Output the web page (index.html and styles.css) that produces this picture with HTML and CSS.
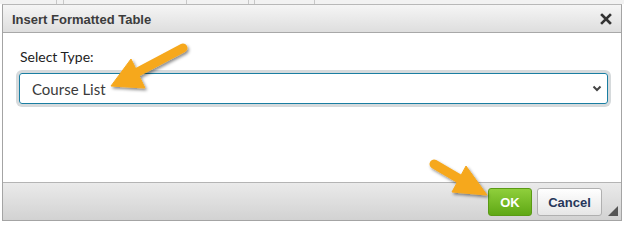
FILE: index.html
```html
<!DOCTYPE html>
<html lang="en">
<head>
  <meta charset="UTF-8">
  <title>Insert Formatted Table</title>
  <link rel="stylesheet" href="styles.css">
</head>
<body>

  <!-- Editor toolbar peeking out above the dialog -->
  <div class="toolbar-strip">
    <span class="tb-sep" style="left: 56px"></span>
    <span class="tb-sep" style="left: 63px"></span>
    <span class="tb-sep" style="left: 186px"></span>
    <span class="tb-sep" style="left: 248px"></span>
    <span class="tb-sep" style="left: 254px"></span>
    <span class="tb-sep" style="left: 314px"></span>
  </div>

  <div class="dialog">
    <div class="dialog-title">
      <span class="title-text">Insert Formatted Table</span>
      <svg class="close-icon" width="12" height="12" viewBox="0 0 12 12">
        <path d="M2 2 L10 10 M10 2 L2 10" stroke="#333" stroke-width="2.6" stroke-linecap="square"/>
      </svg>
    </div>

    <div class="dialog-body">
      <label class="field-label">Select Type:</label>
      <div class="select-box">
        <span class="select-value">Course List</span>
        <svg class="chevron" width="10" height="7" viewBox="0 0 10 7">
          <path d="M1.5 1.5 L5 5 L8.5 1.5" fill="none" stroke="#444" stroke-width="2"/>
        </svg>
      </div>
    </div>

    <div class="dialog-footer">
      <button class="btn btn-ok">OK</button>
      <button class="btn btn-cancel">Cancel</button>
      <span class="resize-grip"></span>
    </div>
  </div>

  <!-- Callout arrows drawn over the screenshot -->
  <svg class="callouts" width="624" height="225" viewBox="0 0 624 225">
    <defs>
      <filter id="shadow" x="-30%" y="-30%" width="160%" height="160%">
        <feDropShadow dx="1.5" dy="2" stdDeviation="1.6" flood-color="#000" flood-opacity="0.45"/>
      </filter>
    </defs>
    <g fill="#f6a81e" stroke="#f6a81e" filter="url(#shadow)">
      <line x1="183" y1="48" x2="134" y2="74" stroke-width="9" stroke-linecap="round"/>
      <polygon points="111,86 131,59 145,88" stroke-width="1" stroke-linejoin="round"/>
      <line x1="434" y1="164" x2="463" y2="181" stroke-width="9" stroke-linecap="round"/>
      <polygon points="487,195 466,166 452,192" stroke-width="1" stroke-linejoin="round"/>
    </g>
  </svg>

</body>
</html>
```

FILE: styles.css
```css
body {
  margin: 0;
  padding: 0;
  background-color: #fff;
  position: relative;
  width: 624px;
  height: 225px;
  overflow: hidden;
  font-family: "Liberation Sans", Arial, sans-serif;
}

.toolbar-strip {
  position: relative;
  height: 4px;
  background: #f2f2f2;
}

.tb-sep {
  position: absolute;
  top: 0;
  width: 1px;
  height: 4px;
  background: #c8c8c8;
}

/* Dialog */
.dialog {
  margin-left: 2px;
  width: 618px;
  border: 1px solid #a4a4a4;
  border-top-color: #b8b8b8;
  background: #fff;
  display: flex;
  flex-direction: column;
}

.dialog-title {
  height: 27px;
  display: flex;
  align-items: center;
  justify-content: space-between;
  padding: 0 9px 0 9px;
  background: linear-gradient(#f5f5f5, #dedede);
  border-bottom: 1px solid #a8a8a8;
}

.title-text {
  font-weight: bold;
  font-size: 13px;
  color: #3c3c3c;
  padding-top: 1px;
}

.close-icon {
  display: block;
  margin-top: 1px;
}

.dialog-body {
  height: 149px;
  padding: 16px 13px 0 16px;
  box-sizing: border-box;
  display: flex;
  flex-direction: column;
  font-family: Lato, "Open Sans", sans-serif;
}

.field-label {
  font-size: 14px;
  line-height: 16px;
  color: #222;
  margin-left: 1px;
}

.select-box {
  margin-top: 8px;
  height: 31px;
  box-sizing: border-box;
  border: 1px solid #1a7ea2;
  border-radius: 3px;
  box-shadow: 0 0 0 3px #d6dadc;
  display: flex;
  align-items: center;
  justify-content: space-between;
  padding: 0 5px 0 12px;
}

.select-value {
  font-size: 15px;
  color: #3a3a3a;
}

.chevron {
  display: block;
}

/* Footer */
.dialog-footer {
  position: relative;
  height: 38px;
  border-top: 1px solid #b4b4b4;
  background: linear-gradient(#eaeaea, #d2d2d2);
  display: flex;
  justify-content: flex-end;
  align-items: flex-start;
  gap: 5px;
  padding: 5px 19px 0 0;
  box-sizing: border-box;
}

.btn {
  height: 28px;
  border-radius: 3px;
  font-family: "Liberation Sans", Arial, sans-serif;
  font-weight: bold;
  font-size: 13px;
  padding: 0;
  cursor: pointer;
}

.btn-ok {
  width: 44px;
  color: #fff;
  border: 1px solid #5a9a14;
  background: linear-gradient(#8fcf3c, #5fa815);
}

.btn-cancel {
  width: 65px;
  color: #26365a;
  border: 1px solid #b0b0b0;
  background: linear-gradient(#ffffff, #e6e6e6);
}

.resize-grip {
  position: absolute;
  right: 3px;
  bottom: 4px;
  width: 0;
  height: 0;
  border-left: 10px solid transparent;
  border-bottom: 10px solid #555;
}

.callouts {
  position: absolute;
  top: 0;
  left: 0;
  pointer-events: none;
}
```
